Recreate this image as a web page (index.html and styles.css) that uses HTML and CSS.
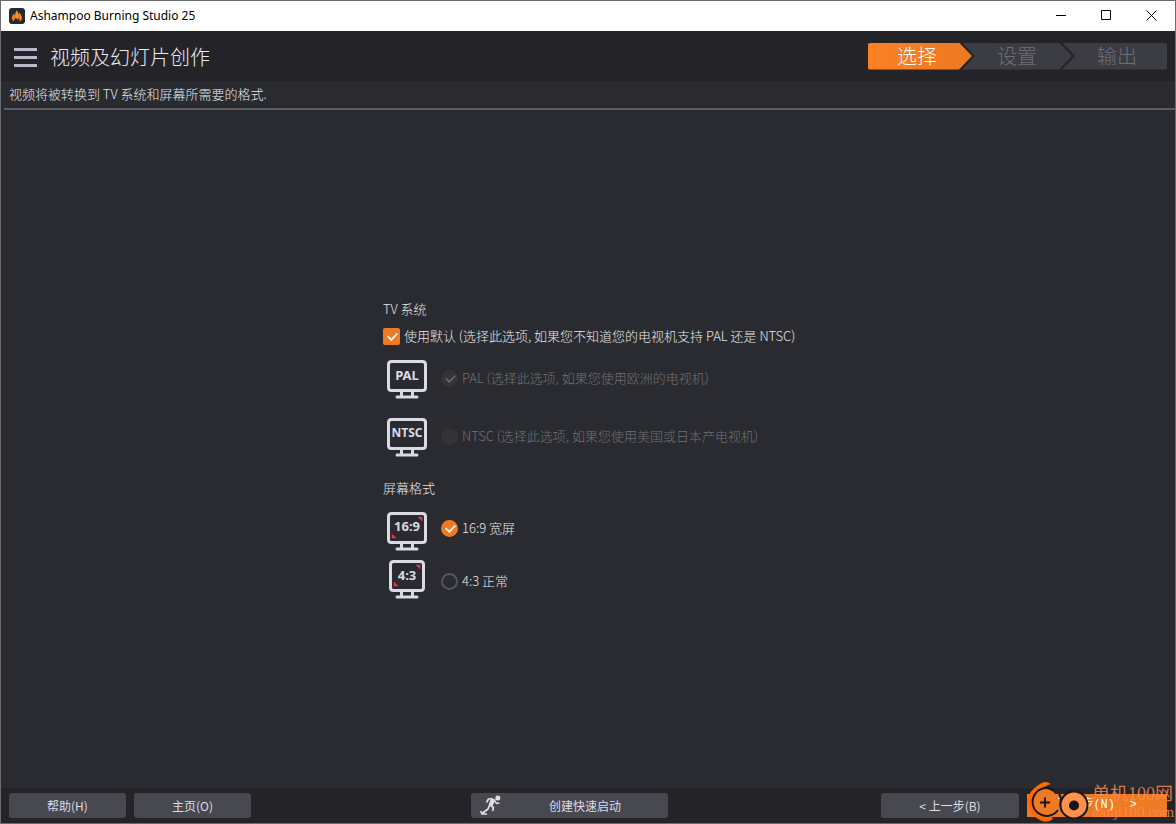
FILE: index.html
```
<!DOCTYPE html>
<html lang="zh-CN">
<head>
<meta charset="utf-8">
<meta name="viewport" content="width=device-width, initial-scale=1">
<title>Ashampoo Burning Studio 25</title>
<link rel="stylesheet" href="styles.css">
</head>
<body>
<div class="window">
  <header class="titlebar">
    <svg class="app-icon" viewBox="0 0 16 16" aria-hidden="true">
      <rect width="16" height="16" rx="3" fill="#1f2a33"/>
      <path d="M5 13.500C2.500 12 2.200 9.500 3.500 7.500L4.300 5.500 5.200 7.500C5.800 5.500 7 4.500 7.500 2.200 9 3.500 9.500 5 9.500 6.500L10.800 4.200C11 6 13.500 8 13 10.500 12.700 12 12 13 10.500 13.700 11 12 10.500 11 9.500 10.200L8.500 12 7 10C5.500 11 4.800 12 5 13.500Z" fill="#f47c16"/>
      <path d="M7.600 4.500C8.500 6 8 7.500 7.800 9" stroke="#ffb04a" fill="none"/>
    </svg>
    <span class="app-name">Ashampoo Burning Studio 25</span>
    <div class="window-controls">
      <button class="window-button" type="button" aria-label="最小化"><svg viewBox="0 0 11 11"><path d="M0 5.500H10" /></svg></button>
      <button class="window-button" type="button" aria-label="最大化"><svg viewBox="0 0 11 11"><path d="M.5 .5H9.500V9.500H.5Z"/></svg></button>
      <button class="window-button" type="button" aria-label="关闭"><svg viewBox="0 0 11 11"><path d="M.5 .5L10.500 10.500M10.500 .5L.5 10.500"/></svg></button>
    </div>
  </header>

  <div class="page-header">
    <button class="menu-button" type="button" aria-label="菜单"><span></span><span></span><span></span></button>
    <h1 class="page-title">视频及幻灯片创作</h1>
    <ol class="steps">
      <li class="step step-first step-current" aria-current="step">选择</li>
      <li class="step step-middle">设置</li>
      <li class="step step-last">输出</li>
    </ol>
  </div>

  <p class="description">视频将被转换到 TV 系统和屏幕所需要的格式.</p>

  <main class="content">
    <form class="options">
      <h2 class="group-title">TV 系统</h2>
      <label class="choice default-choice"><input class="tick" type="checkbox" checked><span>使用默认 (选择此选项, 如果您不知道您的电视机支持 PAL 还是 NTSC)</span></label>
      <div class="option-row">
        <svg class="screen" viewBox="0 0 48 40" aria-hidden="true">
          <path class="screen-line" d="M8.500 2.500H39.500Q42.500 2.500 42.500 5.500V28.500Q42.500 31.500 39.500 31.500H8.500Q5.500 31.500 5.500 28.500V5.500Q5.500 2.500 8.500 2.500M18.500 32V38M29.500 32V38M14 38H34"/>
          <text class="screen-text" x="24" y="21">PAL</text>
        </svg>
        <label class="choice is-disabled"><input class="tick tick-round" type="radio" name="system" checked disabled><span>PAL (选择此选项, 如果您使用欧洲的电视机)</span></label>
      </div>
      <div class="option-row ntsc-row">
        <svg class="screen" viewBox="0 0 48 40" aria-hidden="true">
          <path class="screen-line" d="M8.500 2.500H39.500Q42.500 2.500 42.500 5.500V28.500Q42.500 31.500 39.500 31.500H8.500Q5.500 31.500 5.500 28.500V5.500Q5.500 2.500 8.500 2.500M18.500 32V38M29.500 32V38M14 38H34"/>
          <text class="screen-text screen-text-small" x="24" y="20">NTSC</text>
        </svg>
        <label class="choice is-disabled"><input class="tick tick-round" type="radio" name="system" disabled><span>NTSC (选择此选项, 如果您使用美国或日本产电视机)</span></label>
      </div>

      <h2 class="group-title format-title">屏幕格式</h2>
      <div class="option-row wide-row">
        <svg class="screen" viewBox="0 0 48 40" aria-hidden="true">
          <path class="screen-line" d="M8.500 2.500H39.500Q42.500 2.500 42.500 5.500V28.500Q42.500 31.500 39.500 31.500H8.500Q5.500 31.500 5.500 28.500V5.500Q5.500 2.500 8.500 2.500M18.500 32V38M29.500 32V38M14 38H34"/>
          <path d="M35 6H39V10ZM9 23V27H13Z" fill="#ee3340" stroke="#ee3340" stroke-width=".5"/>
          <text class="screen-text" x="24" y="20">16:9</text>
        </svg>
        <label class="choice"><input class="tick tick-round" type="radio" name="format" checked><span>16:9 宽屏</span></label>
      </div>
      <div class="option-row normal-row">
        <svg class="screen" viewBox="0 0 48 40" aria-hidden="true">
          <path class="screen-line" d="M10.500 2.500H37.500Q40.500 2.500 40.500 5.500V28.500Q40.500 31.500 37.500 31.500H10.500Q7.500 31.500 7.500 28.500V5.500Q7.500 2.500 10.500 2.500M18.500 32V38M29.500 32V38M14 38H34"/>
          <path d="M33 6H37V10ZM11 23V27H15Z" fill="#ee3340" stroke="#ee3340" stroke-width=".5"/>
          <text class="screen-text" x="24" y="21">4:3</text>
        </svg>
        <label class="choice"><input class="tick tick-round" type="radio" name="format"><span>4:3 正常</span></label>
      </div>
    </form>
  </main>

  <footer class="footer">
    <div class="button-group">
      <button class="button" type="button">帮助(H)</button>
      <button class="button" type="button">主页(O)</button>
    </div>
    <button class="button quick-button" type="button">
      <svg class="runner" viewBox="0 0 22 22" aria-hidden="true">
        <circle cx="17.800" cy="4" r="2.500" fill="#e0e0e4"/>
        <path d="M14.500 6.500L16.500 9.500 19.500 9" fill="none" stroke="#e0e0e4" stroke-width="1.500"/>
        <path d="M11 4L15.500 5.500 12.500 12 8.500 11.500Z" fill="#e0e0e4"/>
        <path d="M12 4.500L8.500 5 6.500 8.500M10.500 11.500L13.500 13.500 12.500 17M9.500 11.500L8 15 2 19.500M.8 17L2 20H7" fill="none" stroke="#e0e0e4" stroke-width="1.700" stroke-linejoin="round"/>
      </svg>
      <span class="quick-label">创建快速启动</span>
    </button>
    <div class="button-group">
      <button class="button back-button" type="button">&lt; 上一步(B)</button>
      <div class="next-wrap">
        <button class="button next-button" type="button">下一步(N)&nbsp; &gt;</button>
        <div class="watermark">
          <svg class="watermark-logo" viewBox="0 0 64 42" aria-hidden="true">
            <path d="M24 3Q18-1 13 3Q1 10 0 21Q1 33 13 39Q19 43 26 38L24 35Q7 37 6 21Q6 9 24 3Z" fill="#ff6a00"/>
            <circle cx="18" cy="21" r="13" fill="#ee7a23"/>
            <path d="M27 9A14 14 0 1 0 31 29M32 13Q35 16 33 25" fill="none" stroke="#171719" stroke-width="2"/>
            <path d="M13 21.500H23M18 16.500V26.500" stroke="#171719" stroke-width="2"/>
            <circle cx="47" cy="24" r="13.500" fill="#ff914d" stroke="#171719" stroke-width="2"/>
            <circle cx="47" cy="24.500" r="5" fill="#171719"/>
          </svg>
          <span class="watermark-text"><span class="watermark-name">单机100网</span><span class="watermark-site">danji100.com</span></span>
        </div>
      </div>
    </div>
  </footer>
</div>
</body>
</html>
```

FILE: styles.css
```
* {
  box-sizing: border-box;
}

body {
  margin: 0;
  background: #2a2b30;
  font-family: "Noto Sans CJK SC", sans-serif;
  font-size: 13px;
  font-weight: 300;
  color: #e6e6e6;
}

button {
  font-family: inherit;
  border: 0;
  padding: 0;
}

.window {
  display: flex;
  flex-direction: column;
  min-height: 100vh;
  border: 1px solid #6c6c6e;
  overflow: hidden;
}

.titlebar {
  display: flex;
  align-items: center;
  height: 30px;
  padding-left: 8px;
  background: #fff;
}

.app-icon {
  width: 16px;
  height: 16px;
}

.app-name {
  margin-left: 5px;
  padding-bottom: 2px;
  font-family: "Noto Sans", sans-serif;
  font-size: 12px;
  font-weight: 400;
  color: #000;
}

.window-controls {
  display: flex;
  margin-left: auto;
  margin-right: 1px;
}

.window-button {
  display: grid;
  place-items: center;
  width: 45px;
  height: 30px;
  background: none;
}

.window-button svg {
  width: 11px;
  height: 11px;
  margin-bottom: 2px;
  fill: none;
  stroke: #000;
}

.page-header {
  display: flex;
  align-items: center;
  height: 50px;
  padding: 0 8px 0 13px;
  background: #242428;
}

.menu-button {
  display: flex;
  flex-direction: column;
  gap: 5px;
  margin-top: 3px;
  width: 23px;
  background: none;
}

.menu-button span {
  height: 3px;
  background: #b8b8c8;
}

.page-title {
  margin: 1px 0 0 13px;
  font-size: 20px;
  font-weight: 300;
  line-height: 28px;
  color: #eaeaf4;
}

.steps {
  display: flex;
  margin: 0 0 0 auto;
  padding: 0;
  list-style: none;
}

.step {
  height: 27px;
  background: #3c3c44;
  font-size: 20px;
  font-weight: 300;
  line-height: 26px;
  text-align: center;
  color: #6e6e77;
}

.step-first {
  width: 104px;
  padding-right: 6px;
  border-radius: 2px;
  clip-path: polygon(0 0, calc(100% - 13px) 0, 100% 50%, calc(100% - 13px) 100%, 0 100%);
}

.step-current {
  background: linear-gradient(90deg, #fd8024, #ec7921);
  color: #fff;
}

.step-middle {
  width: 110px;
  margin-left: -10px;
  clip-path: polygon(0 0, calc(100% - 13px) 0, 100% 50%, calc(100% - 13px) 100%, 0 100%, 13px 50%);
}

.step-last {
  width: 105px;
  margin-left: -10px;
  padding-left: 5px;
  border-radius: 2px;
  clip-path: polygon(0 0, 100% 0, 100% 100%, 0 100%, 13px 50%);
}

.description {
  margin: 0 0 0 3px;
  padding: 0 5px 1px;
  border-bottom: 2px solid #5e5e60;
  line-height: 26px;
}

.content {
  flex: 1;
  display: flex;
  align-items: center;
  justify-content: center;
}

.options {
  width: 410px;
}

.group-title {
  margin: 0;
  font-size: 13px;
  font-weight: 300;
  line-height: 20px;
}

.choice {
  display: flex;
  align-items: center;
  gap: 4px;
  height: 18px;
  line-height: 18px;
  white-space: nowrap;
}

.default-choice {
  margin: 8px 0 14px;
}

.is-disabled {
  color: #707074;
}

.tick {
  appearance: none;
  position: relative;
  flex: none;
  width: 17px;
  height: 17px;
  margin: 0;
  border: 2px solid #54545c;
  border-radius: 2px;
}

.tick-round {
  border-radius: 50%;
}

.tick:checked {
  border-color: #ee7a23;
  background: #ee7a23;
}

.tick:disabled {
  border-color: #333338;
  background: #333338;
}

.tick:checked::after {
  content: "";
  position: absolute;
  left: 2px;
  top: 2px;
  width: 9px;
  height: 5px;
  border: solid #fff;
  border-width: 0 0 2px 2px;
  transform: rotate(-45deg) scale(0.85);
}

.tick:disabled::after {
  border-color: #66666c;
}

.option-row {
  display: flex;
  align-items: center;
  gap: 10px;
  height: 40px;
}

.option-row .choice {
  margin-bottom: 2px;
}

.ntsc-row {
  margin-top: 18px;
}

.format-title {
  margin-top: 21px;
}

.wide-row {
  margin-top: 13px;
}

.wide-row .choice {
  margin-bottom: 6px;
}

.normal-row {
  margin-top: 8px;
}

.normal-row .choice {
  margin-top: 4px;
  margin-bottom: 0;
}

.screen {
  width: 48px;
  height: 40px;
}

.screen-line {
  fill: none;
  stroke: #dadae4;
  stroke-width: 3;
  stroke-linecap: round;
}

.screen-text {
  font-family: "Noto Sans", "Open Sans", sans-serif;
  font-size: 13px;
  font-weight: 700;
  text-anchor: middle;
  fill: #dadae4;
}

.screen-text-small {
  font-size: 12px;
}

.footer {
  display: flex;
  justify-content: space-between;
  height: 35px;
  padding: 5px 8px;
  background: #242428;
}

.button-group {
  display: flex;
  gap: 8px;
}

.button {
  width: 117px;
  height: 25px;
  border-radius: 3px;
  background: #484851;
  font-size: 12px;
  line-height: 25px;
  color: #dcdce6;
}

.quick-button {
  display: flex;
  align-items: center;
  width: 197px;
  margin-left: 7px;
  padding-left: 9px;
}

.runner {
  width: 22px;
  height: 22px;
  margin-bottom: 2px;
}

.quick-label {
  flex: 1;
  margin: 0 30px;
  white-space: nowrap;
}

.back-button {
  width: 138px;
}

.next-wrap {
  position: relative;
  width: 140px;
}

.next-button {
  width: 140px;
  height: 23px;
  border-radius: 0;
  background: #ee7a23;
  font-family: "Liberation Mono", "Noto Sans CJK SC", monospace;
  line-height: 23px;
  color: #fff;
}

.watermark {
  position: absolute;
  left: 0;
  bottom: -5px;
  display: flex;
  align-items: flex-end;
  pointer-events: none;
}

.watermark-logo {
  flex: none;
  width: 64px;
  height: 42px;
}

.watermark-text {
  display: flex;
  flex-direction: column;
  margin-left: 1px;
  padding-bottom: 2px;
  font-family: "Liberation Serif", "Noto Sans CJK SC", serif;
  font-weight: 400;
  color: #ff8c58;
  white-space: nowrap;
  opacity: 0.8;
}

.watermark-name {
  font-size: 18px;
  line-height: 20px;
}

.watermark-site {
  font-size: 15px;
  line-height: 17px;
}
```
